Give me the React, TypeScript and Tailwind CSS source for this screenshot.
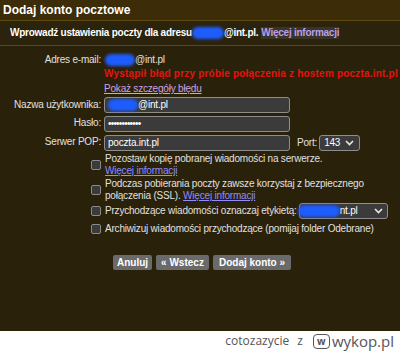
import React from "react";

const font = { fontFamily: '"Liberation Sans", Arial, sans-serif' };

function Blur({ w }: { w: string }) {
  return <span className={`inline-block h-[12px] ${w} rounded-full bg-[#1d5cff] blur-[1.5px] align-middle`} />;
}

function Box() {
  return <span className="block w-[10px] h-[10px] rounded-[2px] border border-[#8a8a8a] bg-[#3b3b3b]" />;
}

function Chevron() {
  return (
    <svg width="9" height="6" viewBox="0 0 9 6" className="shrink-0">
      <path d="M1 1l3.5 3.5L8 1" fill="none" stroke="#e8e8e8" strokeWidth="1.6" />
    </svg>
  );
}

export default function App() {
  return (
    <div className="w-[400px] h-[351px] flex flex-col bg-white overflow-hidden" style={font}>
      <div className="h-[331px] bg-[#2a210a] text-[#e0e0e0] text-[10px] leading-[12px] tracking-[-0.2px]">
        {/* title */}
        <div className="h-[20px] bg-[#3c2c07] px-[3px] pt-[3px] text-[12px] leading-[14px] font-bold text-white tracking-normal">
          Dodaj konto pocztowe
        </div>
        {/* subtitle band */}
        <div className="h-[26px] border-t border-[#5e4812] border-b border-[#4c3b10] bg-[#2b230b] px-[10px] flex items-center font-bold text-white tracking-[-0.25px]">
          <span>Wprowadź ustawienia poczty dla adresu</span>
          <Blur w="w-[32px]" />
          <span>@int.pl.</span>
          <span className="ml-[3px] text-[#b9a0ea] bg-[#3a3428]">Więcej informacji</span>
        </div>

        {/* form */}
        <div className="grid grid-cols-[101px_1fr] gap-x-[3px] pt-[7px]">
          <div className="text-right leading-[14px]">Adres e-mail:</div>
          <div className="leading-[14px] flex items-center">
            <Blur w="w-[30px] ml-[1px]" />
            <span>@int.pl</span>
          </div>

          <div />
          <div className="font-bold text-[#e3140f] leading-[14px] tracking-[0.2px] whitespace-nowrap">
            Wystąpił błąd przy próbie połączenia z hostem poczta.int.pl
          </div>

          <div />
          <div className="pt-[1px] leading-[14px]">
            <span className="text-[#cfa2e6] underline">Pokaż szczegóły błędu</span>
          </div>

          <div className="text-right self-center">Nazwa użytkownika:</div>
          <div className="mt-[1px] w-[186px] h-[16px] rounded-[3px] border border-[#8d8d8d] bg-[#3b3b3b] px-[3px] flex items-center text-white">
            <Blur w="w-[30px]" />
            <span>@int.pl</span>
          </div>

          <div className="text-right self-center">Hasło:</div>
          <div className="mt-[3px] w-[186px] h-[16px] rounded-[3px] border border-[#8d8d8d] bg-[#3b3b3b] px-[3px] flex items-center text-white tracking-[-0.8px]">
            ••••••••••••
          </div>

          <div className="text-right self-center">Serwer POP:</div>
          <div className="mt-[3px] flex items-center">
            <div className="w-[186px] h-[16px] rounded-[3px] border border-[#8d8d8d] bg-[#3b3b3b] px-[3px] flex items-center text-white">
              poczta.int.pl
            </div>
            <span className="ml-[7px]">Port:</span>
            <div className="ml-[2px] w-[41px] h-[16px] rounded-[3px] border border-[#8d8d8d] bg-[#3b3b3b] pl-[4px] pr-[5px] flex items-center justify-between text-white">
              <span>143</span>
              <Chevron />
            </div>
          </div>

          {/* checkbox 1 */}
          <div className="flex justify-end items-center mt-[2px]">
            <Box />
          </div>
          <div className="mt-[2px] pl-[1px]">
            <div>Pozostaw kopię pobranej wiadomości na serwerze.</div>
            <div><span className="text-[#8e8cff] underline">Więcej informacji</span></div>
          </div>

          {/* checkbox 2 */}
          <div className="flex justify-end items-center mt-[1px]">
            <Box />
          </div>
          <div className="mt-[1px] pl-[1px]">
            <div>Podczas pobierania poczty zawsze korzystaj z bezpiecznego</div>
            <div>
              połączenia (SSL). <span className="text-[#8e8cff] underline">Więcej informacji</span>
            </div>
          </div>

          {/* checkbox 3 */}
          <div className="flex justify-end items-center mt-[1px]">
            <Box />
          </div>
          <div className="mt-[1px] pl-[1px] flex items-center">
            <span>Przychodzące wiadomości oznaczaj etykietą:</span>
            <div className="ml-[2px] w-[89px] h-[16px] rounded-[3px] border border-[#8d8d8d] bg-[#3b3b3b] px-[4px] flex items-center justify-between text-white">
              <span className="flex items-center">
                <Blur w="w-[42px] -ml-[6px]" />
                <span>nt.pl</span>
              </span>
              <Chevron />
            </div>
          </div>

          {/* checkbox 4 */}
          <div className="flex justify-end items-center mt-[3px]">
            <Box />
          </div>
          <div className="mt-[3px] pl-[1px] leading-[13px]">
            Archiwizuj wiadomości przychodzące (pomijaj folder Odebrane)
          </div>
        </div>

        {/* buttons */}
        <div className="flex gap-[4px] pl-[113px] mt-[20px] font-bold text-white tracking-normal">
          <button className="h-[15px] w-[39px] rounded-[2px] bg-[#6a6a6a] leading-[15px]">Anuluj</button>
          <button className="h-[15px] w-[53px] rounded-[2px] bg-[#6a6a6a] leading-[15px]">« Wstecz</button>
          <button className="h-[15px] w-[78px] rounded-[2px] bg-[#6a6a6a] leading-[15px]">Dodaj konto »</button>
        </div>
      </div>

      {/* footer */}
      <div className="flex-1 flex items-center justify-end pr-[6px] text-[#555]" style={{ fontFamily: '"Open Sans", "Noto Sans", sans-serif' }}>
        <span className="text-[12px]">cotozazycie</span>
        <span className="text-[12px] ml-[8px]">z</span>
        <span className="flex items-center ml-[10px]">
          <span className="w-[17px] h-[15px] rounded-[4px] border-[1.5px] border-[#555] flex items-center justify-center text-[10px] font-bold leading-none">w</span>
          <span className="ml-[2px] text-[15px] leading-none">wykop.pl</span>
        </span>
      </div>
    </div>
  );
}
